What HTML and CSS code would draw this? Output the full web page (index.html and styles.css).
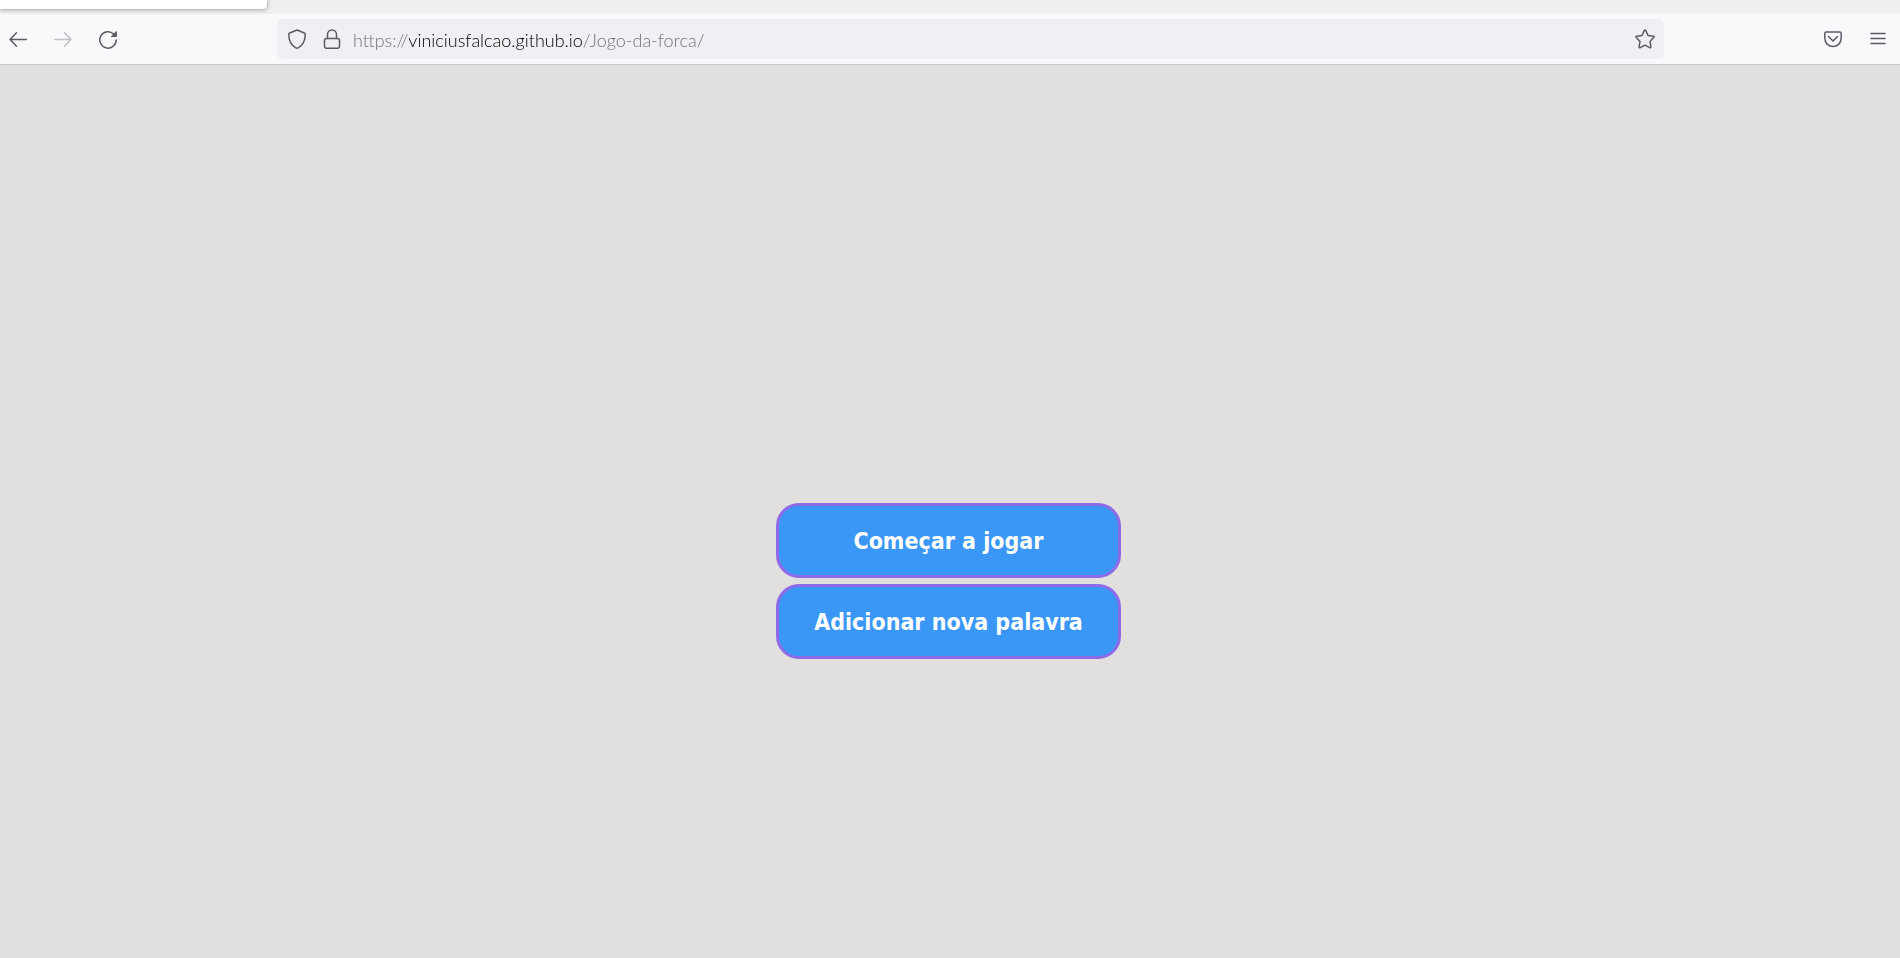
FILE: index.html
```html
<!DOCTYPE html>
<html lang="pt-BR">
<head>
<meta charset="utf-8">
<title>Jogo da forca</title>
<link rel="stylesheet" href="styles.css">
</head>
<body>
<header class="browser">
  <div class="tabstrip"><div class="tab"></div></div>
  <nav class="toolbar" aria-label="Navegação">
    <div class="tools">
      <button class="tool" type="button" aria-label="Voltar">
        <svg class="icon" viewBox="0 0 20 20"><path d="M18.300 10.500H2M8.500 3.700L2 10.500L8.500 17.300"/></svg>
      </button>
      <button class="tool" type="button" aria-label="Avançar" disabled>
        <svg class="icon" viewBox="0 0 20 20"><path d="M1.700 10.500H18M11.500 3.700L18 10.500L11.500 17.300"/></svg>
      </button>
      <button class="tool" type="button" aria-label="Recarregar">
        <svg class="icon" viewBox="0 0 20 20"><path d="M18.200 11A8.200 8.200 0 1 1 15.700 5"/><path class="solid" d="M18.400 2.800V7.500H13.600Z"/></svg>
      </button>
    </div>
    <div class="address">
      <svg class="icon shield" viewBox="0 0 20 20"><path d="M10 1L17.300 4Q18.200 4.400 18.200 5.400C18.200 11 16.500 15.500 11.500 18.700Q10 19.600 8.500 18.700C3.500 15.500 1.800 11 1.800 5.400Q1.800 4.400 2.700 4Z"/></svg>
      <svg class="icon" viewBox="0 0 20 20"><rect x="2.500" y="9.500" width="15" height="9.800" rx="2"/><path d="M5.500 9.500V5.500A4.500 4.500 0 0 1 14.500 5.500V9.500"/></svg>
      <input class="url" type="text" aria-label="Endereço" spellcheck="false" value="https://viniciusfalcao.github.io/Jogo-da-forca/">
      <button class="star" type="button" aria-label="Adicionar aos favoritos">
        <svg class="icon" viewBox="0 0 20 20"><path d="M9.200 1.600Q10 0.200 10.800 1.600L13 6.500L18.200 7.200Q19.700 7.500 18.700 8.600L15 12.400L15.900 17.700Q16 19.200 14.700 18.600L10 16.100L5.300 18.600Q4 19.200 4.100 17.700L5 12.400L1.300 8.600Q0.300 7.500 1.800 7.200L7 6.500Z"/></svg>
      </button>
    </div>
    <div class="tools">
      <button class="tool" type="button" aria-label="Salvar no Pocket">
        <svg class="icon" viewBox="0 0 20 20"><path d="M3.300 3H16.700Q18.200 3 18.200 4.500V9.300A8.200 8.200 0 0 1 1.800 9.300V4.500Q1.800 3 3.300 3ZM5.500 7.500L10 12L14.500 7.500"/></svg>
      </button>
      <button class="tool" type="button" aria-label="Menu">
        <svg class="icon" viewBox="0 0 20 20"><path d="M3 4.500H17M3 9.500H17M3 14.500H17"/></svg>
      </button>
    </div>
  </nav>
</header>
<main class="page">
  <div class="menu">
    <button class="choice" type="button">Começar a jogar</button>
    <button class="choice" type="button">Adicionar nova palavra</button>
  </div>
</main>
</body>
</html>
```
FILE: styles.css
```css
* {
  box-sizing: border-box;
}

body {
  display: flex;
  flex-direction: column;
  min-height: 100vh;
  margin: 0;
  background: #e2e0de;
  font-family: "Open Sans", "Noto Sans", sans-serif;
}

button {
  margin: 0;
  padding: 0;
  border: 0;
  background: none;
  color: inherit;
  font: inherit;
}

.tabstrip {
  display: flex;
  height: 14px;
  overflow: hidden;
  background: #efefef;
}

.tab {
  width: 267px;
  height: 9px;
  border-radius: 0 0 4px 0;
  background: #fff;
  box-shadow: 0 0 5px rgba(0, 0, 0, 0.45);
}

.toolbar {
  display: flex;
  align-items: center;
  padding: 5px 4px 5px 0;
  border-bottom: 1px solid #c8c8ca;
  background: #f9f9fb;
  color: #5b5b66;
}

.tools {
  display: flex;
  gap: 9px;
}

.tool {
  display: grid;
  place-items: center;
  width: 36px;
  height: 36px;
}

.tool:disabled {
  color: #bebec4;
}

.icon {
  display: block;
  flex: none;
  width: 20px;
  height: 20px;
  fill: none;
  stroke: currentColor;
  stroke-width: 1.5;
  stroke-linecap: round;
  stroke-linejoin: round;
}

.icon .solid {
  fill: currentColor;
  stroke-width: 1;
}

.address {
  display: flex;
  flex: 1;
  align-items: center;
  height: 40px;
  margin: 0 151px;
  padding: 0 9px 0 10px;
  border-radius: 5px;
  background: #f0eff4;
}

.shield {
  margin-right: 15px;
}

.url {
  flex: 1;
  min-width: 0;
  height: 40px;
  margin-left: 11px;
  padding: 2px 0 0;
  border: 0;
  outline: 0;
  background: linear-gradient(90deg, #6c6c72 56px, #000 56px, #000 229px, #6c6c72 229px);
  background-clip: text;
  color: transparent;
  font-family: Lato, "Open Sans", sans-serif;
  font-size: 18px;
  font-weight: 300;
}

.page {
  display: flex;
  flex: 1;
  align-items: center;
  justify-content: center;
  padding: 139px 3px 0 0;
}

.menu {
  display: grid;
  gap: 6px;
}

.choice {
  padding: 19px 35px 17px;
  border: 3px solid #8e6ae8;
  border-radius: 23px;
  background: #3b97f6;
  color: #fff;
  font-family: "DejaVu Sans Condensed", "DejaVu Sans", sans-serif;
  font-size: 23px;
  font-weight: 700;
  line-height: 33px;
}
```
